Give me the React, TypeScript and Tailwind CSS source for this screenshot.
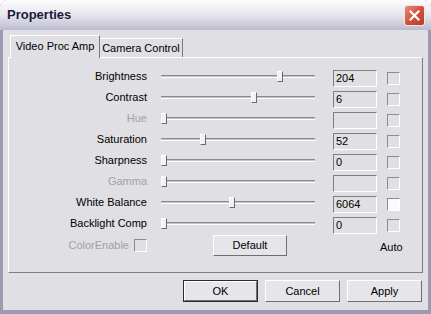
import React from 'react';

type Row = { label: string; pos: number | null; value: string; disabled?: boolean; checkWhite?: boolean };

const rows: Row[] = [
  { label: 'Brightness', pos: 116, value: '204' },
  { label: 'Contrast', pos: 90, value: '6' },
  { label: 'Hue', pos: 0, value: '', disabled: true },
  { label: 'Saturation', pos: 39, value: '52' },
  { label: 'Sharpness', pos: 0, value: '0' },
  { label: 'Gamma', pos: 0, value: '', disabled: true },
  { label: 'White Balance', pos: 68, value: '6064', checkWhite: true },
  { label: 'Backlight Comp', pos: 0, value: '0' },
];

function Slider({ pos }: { pos: number }) {
  return (
    <div className="relative flex h-[21px] w-[154px] items-center">
      <div className="h-[3px] w-full border-t border-b border-t-[#8a8a8a] border-b-white bg-[#c4c4c4]" />
      <div
        className="absolute top-[5px] h-[11px] w-[6px] border border-t-white border-l-white border-r-[#6a6a6a] border-b-[#6a6a6a] bg-[#f2f2f2]"
        style={{ left: pos }}
      />
    </div>
  );
}

function Check({ white }: { white?: boolean }) {
  return (
    <div
      className={`h-[13px] w-[13px] border border-t-[#8d8d8d] border-l-[#8d8d8d] border-r-white border-b-white ${
        white ? 'bg-[#fbfbfb]' : 'bg-[#e0dfe3]'
      }`}
    />
  );
}

function Button({ label, def }: { label: string; def?: boolean }) {
  return (
    <div
      className={`flex items-center justify-center ${def ? 'border border-[#2a2a2a]' : ''}`}
    >
      <div
        className={`flex items-center justify-center border border-t-white border-l-white border-r-[#6f6f6f] border-b-[#6f6f6f] bg-[#e6e5e9] text-black ${
          def ? 'h-[20px] w-[73px]' : 'h-[22px] w-[75px]'
        }`}
      >
        {label}
      </div>
    </div>
  );
}

export default function App() {
  return (
    <div
      className="flex h-[314px] w-[431px] flex-col overflow-hidden rounded-t-[7px] bg-[#9b9ab2] text-[11px] text-black"
      style={{ fontFamily: '"Liberation Sans", Arial, sans-serif' }}
    >
      <div className="flex h-[30px] shrink-0 items-center justify-between bg-gradient-to-b from-[#fdfdfe] via-[#e6e6ee] to-[#bdbccf] pl-[7px] pr-[6px]">
        <span className="text-[13px] font-bold text-[#1b1b3a]">Properties</span>
        <div className="flex h-[21px] w-[21px] items-center justify-center rounded-[3px] border border-[#f4e6e6] bg-gradient-to-br from-[#e88a7c] via-[#d4503e] to-[#b83a2c]">
          <svg width="11" height="11" viewBox="0 0 11 11">
            <path d="M1.5 1.5 L9.5 9.5 M9.5 1.5 L1.5 9.5" stroke="white" strokeWidth="2.2" strokeLinecap="square" />
          </svg>
        </div>
      </div>

      <div className="mx-[3px] mb-[4px] flex flex-1 flex-col bg-[#e0dfe3] px-[5px] pt-[5px]">
        <div className="flex h-[22px] items-end pl-[2px]">
          <div className="relative z-10 -mb-px flex h-[23px] w-[90px] items-center justify-center border border-b-0 border-t-white border-l-white border-r-[#7a7a7a] bg-[#e0dfe3] pb-[2px]">
            Video Proc Amp
          </div>
          <div className="flex h-[19px] w-[83px] items-center justify-center border border-b-0 border-t-white border-l-0 border-r-[#7a7a7a] bg-[#e0dfe3]">
            Camera Control
          </div>
        </div>

        <div className="flex h-[216px] flex-col border border-t-white border-l-white border-r-[#7f7f7f] border-b-[#7f7f7f] pt-[8px]">
          {rows.map((r) => (
            <div key={r.label} className="flex h-[21px] items-center">
              <div className={`w-[138px] text-right ${r.disabled ? 'text-[#a3a3a3]' : ''}`}>{r.label}</div>
              <div className="ml-[14px]">
                <Slider pos={r.pos ?? 0} />
              </div>
              <div className="ml-[18px] mt-[3px] flex h-[17px] w-[44px] items-center border border-t-[#7f7f7f] border-l-[#7f7f7f] border-r-white border-b-white bg-[#e0dfe3] pl-[2px] leading-none">
                {r.value}
              </div>
              <div className="ml-[10px] mt-[4px]">
                <Check white={r.checkWhite} />
              </div>
            </div>
          ))}
          <div className="mt-[1px] flex h-[21px] items-center">
            <div className="flex w-[138px] items-center justify-end gap-[5px] text-[#a3a3a3]">
              <span>ColorEnable</span>
              <Check />
            </div>
            <div className="ml-[66px] flex h-[21px] w-[74px] items-center justify-center border border-t-white border-l-white border-r-[#6f6f6f] border-b-[#6f6f6f] bg-[#e6e5e9]">
              Default
            </div>
            <div className="ml-[93px] mt-[3px]">Auto</div>
          </div>
        </div>

        <div className="mt-[7px] flex justify-end gap-[7px] pr-[1px]">
          <Button label="OK" def />
          <Button label="Cancel" />
          <Button label="Apply" />
        </div>
      </div>
    </div>
  );
}
